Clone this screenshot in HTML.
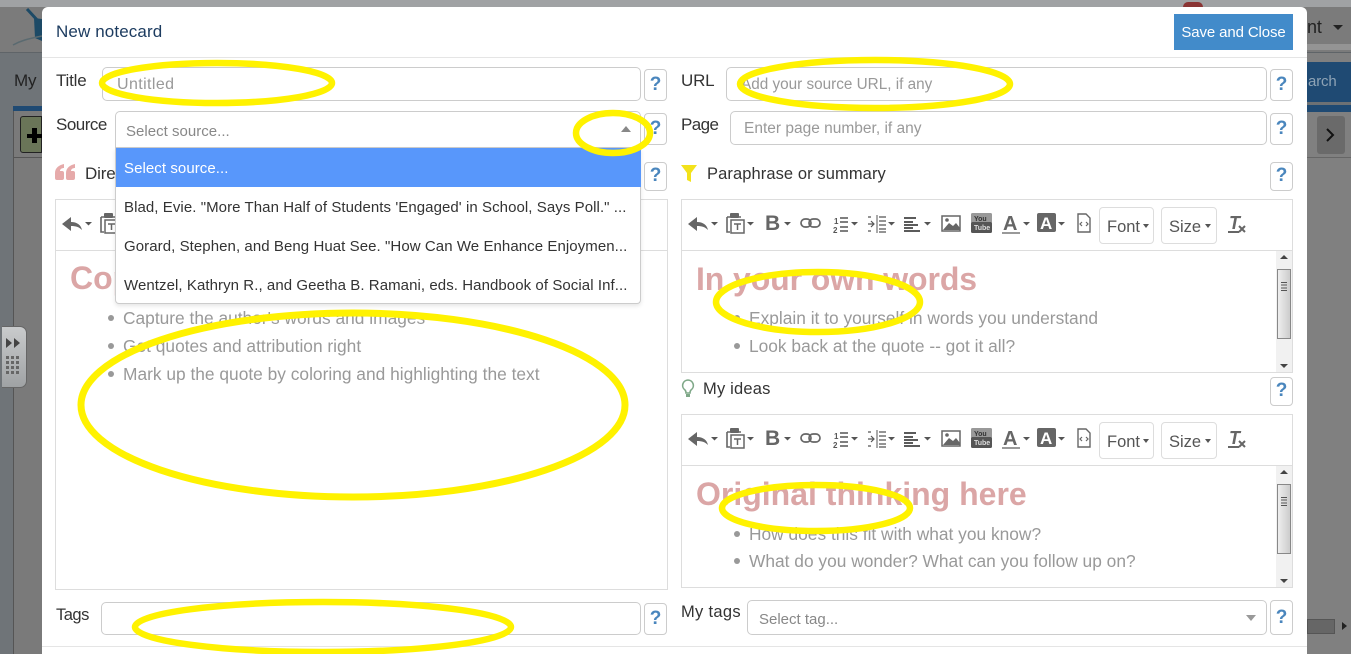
<!DOCTYPE html>
<html><head><meta charset="utf-8">
<style>
html,body{margin:0;padding:0;width:1351px;height:654px;overflow:hidden;background:#808080;}
body{position:relative;font-family:"Liberation Sans",sans-serif;color:#333;}
.a{position:absolute;box-sizing:border-box;}
.t{position:absolute;white-space:nowrap;font-size:16px;line-height:20px;color:#333;letter-spacing:-.15px;}
.in{position:absolute;box-sizing:border-box;border:1px solid #ccc;border-radius:5px;background:#fff;font-size:15.5px;color:#999;white-space:nowrap;}
.q{position:absolute;box-sizing:border-box;width:23px;border:1px solid #ccc;border-radius:4px;background:#fff;color:#4a86bd;font-weight:bold;font-size:19px;text-align:center;}
.ed{position:absolute;box-sizing:border-box;border:1px solid #ddd;background:#fff;overflow:hidden;}
.h{position:absolute;font-weight:bold;font-size:32px;line-height:36px;color:#dba6a6;white-space:nowrap;}
.li{position:absolute;font-size:17.35px;line-height:20px;color:#999;white-space:nowrap;}
.li:before{content:"";position:absolute;left:-15px;top:7px;width:6px;height:6px;border-radius:50%;background:#999;}
.opt{position:absolute;width:525px;height:39px;line-height:41px;padding-left:8px;box-sizing:border-box;font-size:15px;color:#333;white-space:nowrap;overflow:hidden;letter-spacing:.07px;}
.btn{position:absolute;box-sizing:border-box;height:37px;border:1px solid #ddd;border-radius:4px;font-size:16.5px;color:#555;line-height:38px;padding-left:7px;background:#fff;}
.btn i{position:absolute;right:4px;top:16px;border:3.5px solid transparent;border-top:4px solid #555;border-bottom:0;}
.sb{position:absolute;right:0;top:0;bottom:0;width:16px;background:#f1f1f1;}
.grip{position:absolute;left:5px;top:31px;width:6px;height:9px;background:repeating-linear-gradient(#555 0 1px,transparent 1px 2.67px);}
</style></head>
<body>
<svg width="0" height="0" style="position:absolute">
<defs>
<g id="caret"><path d="M0 0h7l-3.500 3.500z" fill="#555"/></g>
<symbol id="tb" viewBox="0 0 410 50" width="410" height="50" overflow="visible">
<path d="M6 24l9-7v5c6 0 10 3 11 8-3-3-6-4-11-4v5z" fill="#666"/><use href="#caret" x="29" y="22"/>
<path d="M45 17h4M56 17h3M45 17v15h3" fill="none" stroke="#666" stroke-width="1.600"/><rect x="48" y="13" width="9" height="5" rx="1" fill="#666"/>
<rect x="49" y="20" width="13" height="13" fill="#fff" stroke="#666" stroke-width="1.500"/><path d="M52 24h7M55.500 24v6" stroke="#666" stroke-width="1.500"/><use href="#caret" x="65" y="22"/>
<text x="83" y="30" font-family="Liberation Sans" font-weight="bold" font-size="21" fill="#666">B</text><use href="#caret" x="102" y="22"/>
<rect x="119" y="19" width="10" height="8" rx="4" fill="none" stroke="#666" stroke-width="1.700"/><rect x="127" y="19" width="11" height="8" rx="4" fill="none" stroke="#666" stroke-width="1.700"/>
<text x="152" y="24" font-family="Liberation Sans" font-weight="bold" font-size="8" fill="#555">1</text><text x="151" y="33" font-family="Liberation Sans" font-weight="bold" font-size="8" fill="#555">2</text><path d="M158 18h8M158 22h8M158 27h8M158 31h8" stroke="#555" stroke-width="1.500"/><use href="#caret" x="169" y="22"/>
<path d="M186 24h6M189 21l3 3-3 3M186 17h3M186 31h3" fill="none" stroke="#555" stroke-width="1.200"/><path d="M195 15v18" stroke="#555"/><path d="M197 17h7M197 21h7M197 25h7M197 29h7M197 32h7" stroke="#555" stroke-width="1.200"/><use href="#caret" x="206" y="22"/>
<path d="M222 18h12M222 22h9M222 25h14M222 28h9M222 31h16" stroke="#444" stroke-width="1.800"/><use href="#caret" x="242" y="22"/>
<rect x="260" y="16" width="18" height="15" fill="#fff" stroke="#666" stroke-width="1.500"/><path d="M261 30l6-7 4 3 3-3 4 5v2z" fill="#666"/><circle cx="265" cy="20" r="1.800" fill="#666"/>
<rect x="289" y="13" width="21" height="10" rx="1.500" fill="#999"/><rect x="289" y="22" width="21" height="11" rx="1.500" fill="#555"/><text x="292" y="21" font-family="Liberation Sans" font-weight="bold" font-size="7" fill="#333">You</text><text x="292" y="30" font-family="Liberation Sans" font-weight="bold" font-size="7" fill="#ddd">Tube</text>
<text x="321" y="30" font-family="Liberation Sans" font-weight="bold" font-size="20" fill="#666">A</text><rect x="320" y="32" width="18" height="2" fill="#999"/><use href="#caret" x="341" y="22"/>
<rect x="355" y="13" width="19" height="19" rx="2" fill="#666"/><text x="358" y="29" font-family="Liberation Sans" font-weight="bold" font-size="17" fill="#fff">A</text><use href="#caret" x="376" y="22"/>
<path d="M396 14h8l4 4v14h-12z" fill="#fff" stroke="#666" stroke-width="1.400"/><path d="M400 22l-2 2 2 2M404 22l2 2-2 2" fill="none" stroke="#666" stroke-width="1.200"/>
</symbol>
</defs>
</svg>

<!-- background -->
<div class="a" style="left:0;top:0;width:1351px;height:7px;background:#a0a2a4"></div>
<div class="a" style="left:0;top:7px;width:1351px;height:45px;background:#7b7b7b"></div>
<div class="a" style="left:1307px;top:44px;width:44px;height:6px;background:#949494"></div>
<div class="a" style="left:0;top:52px;width:1351px;height:1px;background:#5f6468"></div>
<div class="a" style="left:0;top:53px;width:42px;height:601px;background:#6f7478"></div>
<div class="a" style="left:13px;top:107px;width:29px;height:547px;background:#7a7a7a;border-left:1px solid #555"></div>
<div class="a" style="left:13px;top:106px;width:29px;height:5px;background:#1f4a73"></div>
<div class="a" style="left:14px;top:157px;width:28px;height:1px;background:#555"></div>
<div class="t" style="left:14px;top:71px;font-size:17px;color:#222">My</div>
<div class="a" style="left:20px;top:116px;width:22px;height:37px;background:#6a7558;border:1px solid #222;border-radius:3px 0 0 3px"></div>
<div class="a" style="left:27px;top:134px;width:15px;height:4px;background:#000"></div>
<div class="a" style="left:32px;top:128px;width:5px;height:15px;background:#000"></div>
<svg class="a" style="left:12px;top:7px" width="30" height="40"><path d="M15 2l12 13" fill="none" stroke="#1d4a66" stroke-width="3"/><path d="M22 11l8 1v22l-7-3z" fill="#1d4a66"/><path d="M1 38c7-4 14-6 29-9" fill="none" stroke="#5a6a70" stroke-width="1.500"/></svg>
<div class="a" style="left:1307px;top:62px;width:44px;height:50px;background:#1f4a73"></div>
<div class="a" style="left:1307px;top:102px;width:44px;height:3px;background:#6d7174"></div>
<div class="t" style="left:1308px;top:72px;color:#8ea3b5;font-size:15px">arch</div>
<div class="t" style="left:1307px;top:17px;font-size:18px;color:#222">nt</div>
<div class="a" style="left:1333px;top:25px;border:5px solid transparent;border-top:5px solid #222;border-bottom:0"></div>
<div class="a" style="left:1307px;top:157px;width:44px;height:1px;background:#666"></div>
<div class="a" style="left:1317px;top:116px;width:28px;height:38px;background:#6a6a6a;border-radius:3px"></div>
<svg class="a" style="left:1324px;top:126px" width="14" height="18"><path d="M3 3l6 6-6 6" fill="none" stroke="#111" stroke-width="2"/></svg>
<div class="a" style="left:1183px;top:2px;width:20px;height:5px;background:#8a3434;border-radius:10px 10px 0 0"></div>
<div class="a" style="left:1307px;top:619px;width:28px;height:15px;background:#666;border:1px solid #555"></div>
<div class="a" style="left:1342px;top:622px;border:4px solid transparent;border-left:5px solid #222;border-right:0"></div>

<!-- left handle -->
<div class="a" style="left:2px;top:326px;width:25px;height:62px;background:linear-gradient(#c9cbcc,#9fa2a4);border-radius:0 7px 7px 0;border:1px solid #666;border-left:0"></div>
<svg class="a" style="left:5px;top:338px" width="18" height="40"><path d="M1 0l6 5-6 5zM9 0l6 5-6 5z" fill="#444"/><g fill="#666"><rect x="1" y="18" width="3" height="3"/><rect x="6" y="18" width="3" height="3"/><rect x="11" y="18" width="3" height="3"/><rect x="1" y="23" width="3" height="3"/><rect x="6" y="23" width="3" height="3"/><rect x="11" y="23" width="3" height="3"/><rect x="1" y="28" width="3" height="3"/><rect x="6" y="28" width="3" height="3"/><rect x="11" y="28" width="3" height="3"/><rect x="1" y="33" width="3" height="3"/><rect x="6" y="33" width="3" height="3"/><rect x="11" y="33" width="3" height="3"/></g></svg>

<!-- modal -->
<div class="a" style="left:42px;top:7px;width:1265px;height:660px;background:#fff;border-radius:6px 6px 0 0"></div>
<div class="a" style="left:42px;top:57px;width:1265px;height:1px;background:#e5e5e5"></div>
<div class="a" style="left:42px;top:646px;width:1265px;height:1px;background:#e5e5e5"></div>
<div class="t" style="left:56px;top:22px;font-size:17px;color:#1d3c60;letter-spacing:.12px">New notecard</div>
<div class="a" style="left:1174px;top:14px;width:119px;height:36px;background:#428bca;color:#fff;font-size:15px;line-height:38px;text-align:center;letter-spacing:-.12px">Save and Close</div>

<!-- row 1 -->
<div class="t" style="left:56px;top:71px;font-size:17px;letter-spacing:-.2px">Title</div>
<div class="in" style="left:102px;top:67px;width:539px;height:34px;line-height:34px;padding-left:14px;font-size:16px;letter-spacing:.4px">Untitled</div>
<div class="q" style="left:644px;top:69px;height:32px;line-height:29px">?</div>
<div class="t" style="left:681px;top:71px;font-size:17px;letter-spacing:-.2px">URL</div>
<div class="in" style="left:726px;top:67px;width:541px;height:34px;line-height:34px;padding-left:14px;font-size:15.3px">Add your source URL, if any</div>
<div class="q" style="left:1270px;top:69px;height:32px;line-height:29px">?</div>

<!-- row 2 -->
<div class="t" style="left:56px;top:115px;font-size:17px;letter-spacing:-.5px">Source</div>
<div class="q" style="left:644px;top:113px;height:32px;line-height:29px">?</div>
<div class="t" style="left:681px;top:115px;font-size:17px;letter-spacing:-.6px">Page</div>
<div class="in" style="left:730px;top:111px;width:537px;height:34px;line-height:34px;padding-left:13px">Enter page number, if any</div>
<div class="q" style="left:1270px;top:113px;height:32px;line-height:29px">?</div>

<!-- row 3 -->
<svg class="a" style="left:55px;top:163px" width="21" height="18"><g fill="#e6aaaa"><path d="M9 1C4 2 0 5 0 10v5a2 2 0 0 0 2 2h5a2 2 0 0 0 2-2v-5a2 2 0 0 0-2-2H5c0-2 2-3 4-3z"/><path d="M20 1c-5 1-9 4-9 9v5a2 2 0 0 0 2 2h5a2 2 0 0 0 2-2v-5a2 2 0 0 0-2-2h-2c0-2 2-3 4-3z"/></g></svg>
<div class="t" style="left:85px;top:164px;font-size:17px">Direct quote</div>
<div class="q" style="left:644px;top:162px;height:29px;line-height:26px">?</div>
<svg class="a" style="left:681px;top:165px" width="16" height="18"><path d="M0 0h16l-6 8v9l-4-2V8z" fill="#f3e21b"/></svg>
<div class="t" style="left:707px;top:164px;font-size:16.5px;letter-spacing:.09px">Paraphrase or summary</div>
<div class="q" style="left:1270px;top:162px;height:29px;line-height:26px">?</div>

<!-- left editor -->
<div class="ed" style="left:55px;top:199px;width:613px;height:391px">
  <svg class="a" style="left:0;top:0" width="100" height="50" viewBox="0 0 100 50"><use href="#tb"/></svg>
  <div class="a" style="left:0;top:50px;width:611px;height:1px;background:#ddd"></div>
  <div class="h" style="left:14px;top:60px">Copy exactly</div>
  <div class="li" style="left:67px;top:108px">Capture the author's words and images</div>
  <div class="li" style="left:67px;top:136px">Get quotes and attribution right</div>
  <div class="li" style="left:67px;top:164px">Mark up the quote by coloring and highlighting the text</div>
</div>

<!-- right editor 1 -->
<div class="ed" style="left:681px;top:199px;width:612px;height:174px">
  <svg class="a" style="left:0;top:0" width="420" height="50" viewBox="0 0 420 50"><use href="#tb"/></svg>
  <div class="btn" style="left:417px;top:7px;width:55px">Font<i></i></div>
  <div class="btn" style="left:479px;top:7px;width:56px">Size<i style="right:5px"></i></div>
  <svg class="a" style="left:545px;top:12px" width="22" height="24"><text x="2" y="17" font-family="Liberation Sans" font-style="italic" font-weight="bold" font-size="18" fill="#666">T</text><rect x="1" y="19" width="11" height="2" fill="#666"/><path d="M12 14l6 6M18 14l-6 6" stroke="#666" stroke-width="2"/></svg>
  <div class="a" style="left:0;top:50px;width:610px;height:1px;background:#ddd"></div>
  <div class="h" style="left:14px;top:61px;letter-spacing:-.1px">In your own words</div>
  <div class="li" style="left:67px;top:108px">Explain it to yourself in words you understand</div>
  <div class="li" style="left:67px;top:136px">Look back at the quote -- got it all?</div>
  <div class="sb" style="top:51px">
    <div class="a" style="left:4px;top:4px;border:4px solid transparent;border-bottom:4px solid #444;border-top:0"></div>
    <div class="a" style="left:1px;top:18px;width:14px;height:70px;background:linear-gradient(90deg,#eee,#ccc);border:1px solid #888"></div>
    <div class="grip"></div>
    <div class="a" style="left:4px;bottom:4px;border:4px solid transparent;border-top:4px solid #444;border-bottom:0"></div>
  </div>
</div>

<!-- My ideas -->
<svg class="a" style="left:681px;top:379px" width="14" height="19"><path d="M7 1a5.500 5.500 0 0 0-3 10c1 1 1 2 1 3h4c0-1 0-2 1-3A5.500 5.500 0 0 0 7 1z" fill="#fff" stroke="#7fa888" stroke-width="1.600"/><rect x="5" y="15" width="4" height="3" fill="#7fa888"/></svg>
<div class="t" style="left:703px;top:379px;font-size:16.5px;letter-spacing:.2px">My ideas</div>
<div class="q" style="left:1270px;top:377px;height:29px;line-height:26px">?</div>

<!-- right editor 2 -->
<div class="ed" style="left:681px;top:414px;width:612px;height:174px">
  <svg class="a" style="left:0;top:0" width="420" height="50" viewBox="0 0 420 50"><use href="#tb"/></svg>
  <div class="btn" style="left:417px;top:7px;width:55px">Font<i></i></div>
  <div class="btn" style="left:479px;top:7px;width:56px">Size<i style="right:5px"></i></div>
  <svg class="a" style="left:545px;top:12px" width="22" height="24"><text x="2" y="17" font-family="Liberation Sans" font-style="italic" font-weight="bold" font-size="18" fill="#666">T</text><rect x="1" y="19" width="11" height="2" fill="#666"/><path d="M12 14l6 6M18 14l-6 6" stroke="#666" stroke-width="2"/></svg>
  <div class="a" style="left:0;top:50px;width:610px;height:1px;background:#ddd"></div>
  <div class="h" style="left:14px;top:61px">Original thinking here</div>
  <div class="li" style="left:67px;top:109px">How does this fit with what you know?</div>
  <div class="li" style="left:67px;top:136px">What do you wonder? What can you follow up on?</div>
  <div class="sb" style="top:51px">
    <div class="a" style="left:4px;top:4px;border:4px solid transparent;border-bottom:4px solid #444;border-top:0"></div>
    <div class="a" style="left:1px;top:18px;width:14px;height:70px;background:linear-gradient(90deg,#eee,#ccc);border:1px solid #888"></div>
    <div class="grip"></div>
    <div class="a" style="left:4px;bottom:4px;border:4px solid transparent;border-top:4px solid #444;border-bottom:0"></div>
  </div>
</div>

<!-- bottom row -->
<div class="t" style="left:56px;top:605px;font-size:16.5px;letter-spacing:-.5px">Tags</div>
<div class="in" style="left:101px;top:602px;width:540px;height:33px"></div>
<div class="q" style="left:644px;top:603px;height:32px;line-height:29px">?</div>
<div class="t" style="left:681px;top:602px;font-size:16.5px;letter-spacing:.3px">My tags</div>
<div class="in" style="left:747px;top:600px;width:520px;height:35px;line-height:37px;padding-left:11px;color:#888;font-size:15px">Select tag...</div>
<div class="a" style="left:1246px;top:615px;border:5px solid transparent;border-top:6px solid #999;border-bottom:0"></div>
<div class="q" style="left:1270px;top:600px;height:35px;line-height:33px">?</div>

<!-- source select + dropdown -->
<div class="a" style="left:115px;top:111px;width:526px;height:37px;background:#fff;border:1px solid #ccc;border-radius:5px 5px 0 0"></div>
<div class="t" style="left:126px;top:122px;font-size:15px;color:#888;letter-spacing:.02px">Select source...</div>
<div class="a" style="left:115px;top:148px;width:526px;height:156px;background:#fff;border:1px solid #ccc;border-top:0;border-radius:0 0 4px 4px;box-shadow:0 2px 4px rgba(0,0,0,.1)">
  <div class="opt" style="left:0;top:0;background:#5897fb;color:#fff">Select source...</div>
  <div class="opt" style="left:0;top:39px">Blad, Evie. "More Than Half of Students 'Engaged' in School, Says Poll." ...</div>
  <div class="opt" style="left:0;top:78px">Gorard, Stephen, and Beng Huat See. "How Can We Enhance Enjoymen...</div>
  <div class="opt" style="left:0;top:117px">Wentzel, Kathryn R., and Geetha B. Ramani, eds. Handbook of Social Inf...</div>
</div>
<div class="a" style="left:621px;top:126px;border:5px solid transparent;border-bottom:6px solid #888;border-top:0"></div>

<!-- yellow marker ellipses -->
<svg class="a" style="left:0;top:0" width="1351" height="654" fill="none" stroke="#fff200" stroke-width="6.500">
<ellipse cx="217" cy="83" rx="115" ry="20"/>
<ellipse cx="875" cy="84" rx="135" ry="24"/>
<ellipse cx="613" cy="133" rx="37" ry="20"/>
<ellipse cx="353" cy="405" rx="272" ry="92" stroke-width="7"/>
<ellipse cx="818" cy="302" rx="102" ry="30"/>
<ellipse cx="816" cy="508" rx="94" ry="23"/>
<ellipse cx="323" cy="627" rx="188" ry="25"/>
</svg>
</body></html>
